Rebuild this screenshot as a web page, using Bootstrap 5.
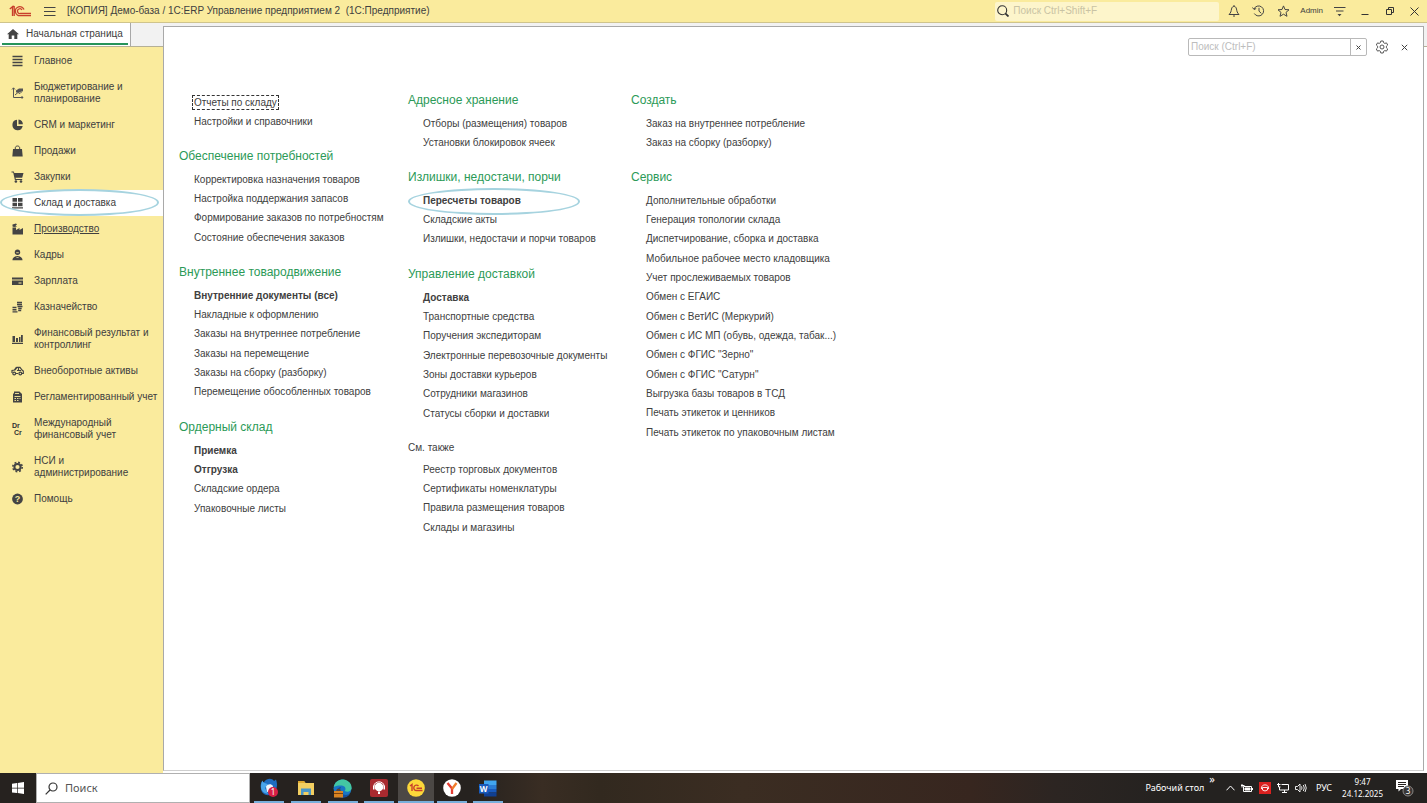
<!DOCTYPE html>
<html lang="ru">
<head>
<meta charset="utf-8">
<meta name="viewport" content="width=device-width, initial-scale=1">
<title>1С:ERP Управление предприятием 2</title>
<link href="https://cdn.jsdelivr.net/npm/bootstrap@5.3.0/dist/css/bootstrap.min.css" rel="stylesheet">
<style>
:root{--yel:#faeb9d;--ink:#404040;--green:#2b9a57}
body{font-family:"Liberation Sans",Arial,sans-serif;font-size:10px;line-height:12px;color:var(--ink);background:#f2f2f2}
a{color:inherit;text-decoration:none}
button{border:0;background:none;padding:0;color:inherit;display:flex;align-items:center;justify-content:center}
svg{display:block;flex:none}
.titlebar{background:var(--yel);height:23px;border-bottom:1px solid #cfc48c;padding-left:9px}
.app-title{margin-left:11px;white-space:pre}
.user-name{font-size:8px}
.gsearch{background:#fdf5cb;width:224px;height:19px;border-radius:2px;margin-right:2px;padding-left:2px}
input{border:0;background:none;outline:0;min-width:0;padding:0}
input::placeholder{color:#bdbdbd;opacity:1}
.gsearch input,.psearch input{font-size:10px}
.gsearch input::placeholder{color:#c9c3a4}
.tool{width:25px;height:22px}
.workspace{background:linear-gradient(#f2f2f2 23px,#b5b096 23px 24px,#fff 24px)}
.side-wrap{width:163px}
.tabs{height:24px;border-bottom:1px solid #b5b096}
.tab-home{width:131px;background:#fff;border-right:1px solid #a8a8a8;padding:0 2px}
.tab-home a{border-bottom:2px solid #26945a;height:22px;padding:2px 0 0 5px;gap:7px}
.side{background:var(--yel);padding-top:1px}
.side a{padding:7px 4px 7px 11px;gap:10px}
.side a.active{background:#fff}
.side a.hovered span{text-decoration:underline}
.ring{position:absolute;pointer-events:none;border:2px solid #a6d3df;border-radius:50%}
.ring-side{inset:-1px 4px 0 0}
.ring-item{left:-15px;top:-3px;width:172px;height:27px}
.panel-box{background:#fff;border:1px solid #a9a9a9;border-bottom-color:#cfcfcf;margin:3px 3px 2px 0}
.panel-tools{padding:11px 11px 0 0}
.psearch{width:179px;height:18px;border:1px solid #b9b9b9;border-radius:2px}
.psearch input{padding-left:2px}
.psearch button{width:16px;border-left:1px solid #b9b9b9}
.sections{padding:37px 15px}
.sec-col{width:223px}
.sec-col:first-child{width:229px}
.sec-col h2{font-size:12px;line-height:15px;color:var(--green);margin:18px 0 6px;font-weight:400}
.sec-col h2:first-child{margin-top:0}
.sec-col h2.plain{font-size:10px;color:var(--ink);margin:17px 0 5px}
.sec-col ul{list-style:none;margin:0;padding-left:15px}
.sec-col li{line-height:19px;white-space:nowrap}
.sec-col li:nth-child(3n){padding-bottom:1px}
.sec-col a.focused{outline:1px dashed #333;outline-offset:1px}
.taskbar{height:30px;background:linear-gradient(90deg,#26221f 0,#26221f 33%,#392d23 38%,#32291f 42%,#3b2d22 52%,#37261f 68%,#2c2522 74%,#242220 82%);color:#fff;font-family:"Noto Sans","Open Sans",sans-serif;font-size:9px}
.start{width:36px}
.tsearch{width:214px;background:#fff;border:1px solid #b0b0b0;gap:7px;padding-left:8px}
.tsearch input{font-family:"Noto Sans",sans-serif;font-size:11px}
.tsearch input::placeholder{color:#555}
.apps{width:256px}
.app-btn{background:linear-gradient(#78afdb,#78afdb) bottom/30px 2px no-repeat}
.app-btn.on{background-color:#4c4845;background-size:36px 2px}
.tray-icons{gap:6px;margin:0 9px 0 11px}
.more{font-size:11px;margin-left:5px}
.clock{font-size:8px;margin:0 13px 0 10px}
.notes{margin-right:13px}
</style>
</head>
<body class="d-flex flex-column min-vh-100">
<header class="titlebar d-flex align-items-center">
  <svg width="23" height="12" viewBox="0 0 23 12" fill="none" stroke="#c8402c" stroke-width="1.300"><path d="M.8 4 3.500 1.700V11M5.200 1V11M3.500 1.500h1.700M15 4.500A4.500 4.500 0 1 0 11.500 10.600H22M13 5A2.400 2.400 0 1 0 11.500 8.500H22"/></svg>
  <button class="ms-2 ps-1" aria-label="Меню"><svg width="12" height="11" viewBox="0 0 12 11" stroke="#444" stroke-width="1"><path d="M0 1.500H11.500M0 5.500H11.500M0 9.500H11.500"/></svg></button>
  <span class="app-title">[КОПИЯ] Демо-база / 1С:ERP Управление предприятием 2  (1С:Предприятие)</span>
  <label class="gsearch ms-auto d-flex align-items-center gap-1">
    <svg width="12" height="12" viewBox="0 0 12 12" fill="none" stroke="#333" stroke-width="1.100"><circle cx="5.200" cy="5.200" r="4.500"/><path d="m8.300 8.300 3.200 3.200" stroke-width="1.800"/></svg>
    <input class="flex-fill" type="text" placeholder="Поиск Ctrl+Shift+F" aria-label="Поиск">
  </label>
  <button class="tool" aria-label="Уведомления"><svg width="12" height="12" viewBox="0 0 12 12" fill="none" stroke="#444"><path d="M1 9.500h10C9 7.500 9 6.500 8.500 4 8 1.800 7 1.500 6 1.500S4 1.800 3.500 4C3 6.500 3 7.500 1 9.500ZM6 0v1.500M5 11h2"/></svg></button>
  <button class="tool" aria-label="История"><svg width="13" height="12" viewBox="0 0 13 12" fill="none" stroke="#444"><path d="M2 4A5 5 0 1 1 2.300 8.500M.5 2.500 2 4.500 4.200 3.500M7 2.800V6.200L9.300 8.300"/></svg></button>
  <button class="tool" aria-label="Избранное"><svg width="13" height="12" viewBox="0 0 13 12" fill="none" stroke="#444"><path d="m6.500.9 1.500 3.600 4 .3-3 2.600 1 3.900-3.500-2.100L3 11.300l1-3.900-3-2.600 4-.3Z"/></svg></button>
  <a href="#" class="user-name mx-1">Admin</a>
  <button class="tool" aria-label="Настройки"><svg width="12" height="11" viewBox="0 0 12 11" stroke="#444"><path d="M0 1.500h11.500M2 5h7.500"/><path d="M3.500 8h4L5.500 10.300Z" fill="#444" stroke="none"/></svg></button>
  <button class="tool" aria-label="Свернуть"><svg width="8" height="10" viewBox="0 0 8 10" stroke="#333"><path d="M.5 8.500h7"/></svg></button>
  <button class="tool" aria-label="Развернуть"><svg width="8" height="8" viewBox="0 0 8 8" fill="none" stroke="#333"><path d="M.5 2.500h5v5h-5ZM2.500 2.500v-2h5v5h-2"/></svg></button>
  <button class="tool" aria-label="Закрыть"><svg width="9" height="9" viewBox="0 0 9 9" stroke="#333"><path d="m.5.5 8 8m0-8-8 8"/></svg></button>
</header>
<div class="workspace d-flex flex-fill">
  <div class="side-wrap d-flex flex-column flex-shrink-0">
    <div class="tabs d-flex"><div class="tab-home"><a href="#" class="d-flex align-items-center">
      <svg width="12" height="10" viewBox="0 0 12 10" fill="#444"><path d="M6 0 0 5.300h1.700V10h3V6.500h2.600V10h3V5.300H12Z"/></svg>Начальная страница</a></div></div>
    <nav class="side flex-fill d-flex flex-column">
      <a href="#" class="d-flex align-items-center"><svg width="13" height="12" viewBox="0 0 13 12" stroke="#444" stroke-width="1.500"><path d="M1.500 1.500h10M1.500 4.500h10M1.500 7.500h10M1.500 10.500h10"/></svg><span>Главное</span></a>
      <a href="#" class="d-flex align-items-center"><svg width="13" height="12" viewBox="0 0 13 12" fill="none" stroke="#555"><path d="M2.500 1v9.500H12M1 2.500 2.500.8 4 2.500M10.500 9l1.500 1.500-1.500 1.300M4 8l3-2.500 2 1 2-2"/><path d="M5 3.500 8 1.500h4v2.500L8 5.500H5Z" fill="#555" stroke="none"/></svg><span>Бюджетирование и планирование</span></a>
      <a href="#" class="d-flex align-items-center"><svg width="13" height="12" viewBox="0 0 13 12" fill="#444"><path d="M6 .8A5.200 5.200 0 1 0 11.700 7H6Z"/><path d="M7.500.5V5.300h4.400A5 5 0 0 0 7.500.5Z"/></svg><span>CRM и маркетинг</span></a>
      <a href="#" class="d-flex align-items-center"><svg width="13" height="12" viewBox="0 0 13 12" fill="#444"><path d="M2 4h9l.7 7.500H1.300Z"/><path d="M4.300 5.500V2.800C4.300.4 8.700.4 8.700 2.800v2.700" fill="none" stroke="#444"/></svg><span>Продажи</span></a>
      <a href="#" class="d-flex align-items-center"><svg width="13" height="12" viewBox="0 0 13 12" fill="#444"><path d="M.5.500h2.300l.5 1.500h9.200l-1.300 4.800H4.600l.2 1.200h6.400v1H3.900L2.200 1.500H.5Z"/><circle cx="4.900" cy="10.500" r="1.300"/><circle cx="10" cy="10.500" r="1.300"/></svg><span>Закупки</span></a>
      <a href="#" class="active position-relative d-flex align-items-center"><svg width="13" height="12" viewBox="0 0 13 12" fill="#444"><path d="M1.500 1h4.500v3.800H1.500ZM7 1h4.500v3.800H7ZM1.500 5.800h4.500v3.400H1.500ZM7 5.800h4.500v3.400H7ZM1 10.200h11v1.300H1Z"/></svg><span>Склад и доставка</span><i class="ring ring-side"></i></a>
      <a href="#" class="hovered d-flex align-items-center"><svg width="13" height="12" viewBox="0 0 13 12" fill="#444"><path d="M1.500 11.500V4.500H5V7L8.500 5v2L12 5v6.500ZM1.500 1.500 5 .5l1 1-1.500 1L6 3.500l-3 .5-1.500-.5Z"/></svg><span>Производство</span></a>
      <a href="#" class="d-flex align-items-center"><svg width="13" height="12" viewBox="0 0 13 12" fill="#444"><circle cx="6.500" cy="3.300" r="2.700"/><path d="M1.500 11.300c0-3 2-3.300 3.500-4.300h3c1.500 1 3.500 1.300 3.500 4.300Z"/><path d="M5.200 3.700h2.600M5 7.500l1.500 1.500L8 7.500" fill="none" stroke="#faeb9d" stroke-width=".8"/></svg><span>Кадры</span></a>
      <a href="#" class="d-flex align-items-center"><svg width="13" height="12" viewBox="0 0 13 12" fill="#444"><path d="M1 2.500h11v2H1ZM1 5.500h11v4.500H1Z"/><path d="M7.500 8h3" stroke="#faeb9d"/></svg><span>Зарплата</span></a>
      <a href="#" class="d-flex align-items-center"><svg width="13" height="12" viewBox="0 0 13 12" fill="none" stroke="#444" stroke-width="1.400"><path d="M6 1.500h5M6 3.500h5M6.500 5.500h5M1.500 6.500h4M1.500 8.700h4M1.500 10.900h5M7.200 7.500h3.500M7.200 9.500h3"/></svg><span>Казначейство</span></a>
      <a href="#" class="d-flex align-items-center"><svg width="13" height="12" viewBox="0 0 13 12" fill="#444"><path d="M1.500 3H4v6H1.500ZM5 5h2v4H5ZM8 4h1.500v5H8ZM10 2h1.800v7H10ZM1 9.700h11V11H1Z"/></svg><span>Финансовый результат и контроллинг</span></a>
      <a href="#" class="d-flex align-items-center"><svg width="13" height="12" viewBox="0 0 13 12" fill="none" stroke="#444" stroke-width="1.200"><path d="M1 8V5.500L4 5l2-2.700h3L11 5l1.300 1v2.500H11M7 8.500H5M3 5.500 5.500 2M6 5.500h4M7.500 2.500v3"/><circle cx="3.200" cy="8.500" r="1.400"/><circle cx="9.300" cy="8.500" r="1.400"/></svg><span>Внеоборотные активы</span></a>
      <a href="#" class="d-flex align-items-center"><svg width="13" height="12" viewBox="0 0 13 12" fill="#444"><path d="M2 2.500h1V.5h5.500L11 3v8.500H2Z"/><path d="M4 2.500h4M3.500 5.500h6M3.500 7.500h1.500M6 7.500h1.500M8.500 7.500h1M3.500 9.500h1.500M6 9.500h1.500" stroke="#faeb9d" stroke-width=".9"/></svg><span>Регламентированный учет</span></a>
      <a href="#" class="d-flex align-items-center"><svg width="13" height="12" viewBox="0 0 13 12" fill="#333" font-family="Liberation Sans" font-weight="700" font-size="7"><text x="1" y="5">Dr</text><text x="3" y="12">Cr</text></svg><span>Международный финансовый учет</span></a>
      <a href="#" class="d-flex align-items-center"><svg width="13" height="12" viewBox="0 0 13 12" fill="none" stroke="#444"><circle cx="6.500" cy="6" r="3.100" stroke-width="2"/><circle cx="6.500" cy="6" r="4.700" stroke-width="1.600" stroke-dasharray="1.850 1.850"/></svg><span>НСИ и<br>администрирование</span></a>
      <a href="#" class="d-flex align-items-center"><svg width="13" height="12" viewBox="0 0 13 12"><circle cx="6.500" cy="6" r="5.400" fill="#444"/><text x="6.500" y="9.200" text-anchor="middle" font-family="Liberation Sans" font-weight="700" font-size="9" fill="#faeb9d">?</text></svg><span>Помощь</span></a>
    </nav>
  </div>
  <main class="panel-box flex-fill">
    <div class="panel-tools d-flex justify-content-end align-items-center">
      <div class="psearch d-flex"><input class="flex-fill" type="text" placeholder="Поиск (Ctrl+F)" aria-label="Поиск"><button aria-label="Очистить"><svg width="5" height="5" viewBox="0 0 5 5" stroke="#444"><path d="m.5.5 4 4m0-4-4 4"/></svg></button></div>
      <button class="ms-2" aria-label="Настройки"><svg width="14" height="14" viewBox="0 0 14 14" fill="none" stroke="#555"><circle cx="7" cy="7" r="2"/><path stroke-linejoin="round" d="M5.800 1h2.400l.4 1.700 1.200.7 1.700-.5 1.200 2.100L11.400 6.200v1.600l1.300 1.200-1.200 2.100-1.700-.5-1.200.7L8.200 13H5.800l-.4-1.700-1.200-.7-1.700.5L1.300 9l1.300-1.200V6.200L1.300 5l1.200-2.100 1.700.5 1.200-.7Z"/></svg></button>
      <button class="ms-2 ps-1 pe-1" aria-label="Закрыть"><svg width="7" height="7" viewBox="0 0 7 7" stroke="#444"><path d="m.8.8 5.400 5.400m0-5.400L.8 6.200"/></svg></button>
    </div>
    <div class="sections d-flex">
      <div class="sec-col">
        <ul>
          <li><a href="#" class="focused">Отчеты по складу</a></li><li><a href="#">Настройки и справочники</a></li>
        </ul>
        <h2>Обеспечение потребностей</h2>
        <ul>
          <li><a href="#">Корректировка назначения товаров</a></li><li><a href="#">Настройка поддержания запасов</a></li><li><a href="#">Формирование заказов по потребностям</a></li><li><a href="#">Состояние обеспечения заказов</a></li>
        </ul>
        <h2>Внутреннее товародвижение</h2>
        <ul>
          <li><a href="#" class="fw-bold">Внутренние документы (все)</a></li><li><a href="#">Накладные к оформлению</a></li><li><a href="#">Заказы на внутреннее потребление</a></li><li><a href="#">Заказы на перемещение</a></li><li><a href="#">Заказы на сборку (разборку)</a></li><li><a href="#">Перемещение обособленных товаров</a></li>
        </ul>
        <h2>Ордерный склад</h2>
        <ul>
          <li><a href="#" class="fw-bold">Приемка</a></li><li><a href="#" class="fw-bold">Отгрузка</a></li><li><a href="#">Складские ордера</a></li><li><a href="#">Упаковочные листы</a></li>
        </ul>
      </div>
      <div class="sec-col">
        <h2>Адресное хранение</h2>
        <ul>
          <li><a href="#">Отборы (размещения) товаров</a></li><li><a href="#">Установки блокировок ячеек</a></li>
        </ul>
        <h2>Излишки, недостачи, порчи</h2>
        <ul>
          <li class="position-relative"><a href="#" class="fw-bold">Пересчеты товаров</a><i class="ring ring-item"></i></li><li><a href="#">Складские акты</a></li><li><a href="#">Излишки, недостачи и порчи товаров</a></li>
        </ul>
        <h2>Управление доставкой</h2>
        <ul>
          <li><a href="#" class="fw-bold">Доставка</a></li><li><a href="#">Транспортные средства</a></li><li><a href="#">Поручения экспедиторам</a></li><li><a href="#">Электронные перевозочные документы</a></li><li><a href="#">Зоны доставки курьеров</a></li><li><a href="#">Сотрудники магазинов</a></li><li><a href="#">Статусы сборки и доставки</a></li>
        </ul>
        <h2 class="plain">См. также</h2>
        <ul>
          <li><a href="#">Реестр торговых документов</a></li><li><a href="#">Сертификаты номенклатуры</a></li><li><a href="#">Правила размещения товаров</a></li><li><a href="#">Склады и магазины</a></li>
        </ul>
      </div>
      <div class="sec-col">
        <h2>Создать</h2>
        <ul>
          <li><a href="#">Заказ на внутреннее потребление</a></li><li><a href="#">Заказ на сборку (разборку)</a></li>
        </ul>
        <h2>Сервис</h2>
        <ul>
          <li><a href="#">Дополнительные обработки</a></li><li><a href="#">Генерация топологии склада</a></li><li><a href="#">Диспетчирование, сборка и доставка</a></li><li><a href="#">Мобильное рабочее место кладовщика</a></li><li><a href="#">Учет прослеживаемых товаров</a></li><li><a href="#">Обмен с ЕГАИС</a></li><li><a href="#">Обмен с ВетИС (Меркурий)</a></li><li><a href="#">Обмен с ИС МП (обувь, одежда, табак...)</a></li><li><a href="#">Обмен с ФГИС "Зерно"</a></li><li><a href="#">Обмен с ФГИС "Сатурн"</a></li><li><a href="#">Выгрузка базы товаров в ТСД</a></li><li><a href="#">Печать этикеток и ценников</a></li><li><a href="#">Печать этикеток по упаковочным листам</a></li>
        </ul>
      </div>
    </div>
  </main>
</div>
<footer class="taskbar d-flex">
  <button class="start" aria-label="Пуск"><svg width="12" height="12" viewBox="0 0 12 12" fill="#fff"><path d="M0 1.700 5 1v4.700H0ZM5.700.9 12 0v5.700H5.700ZM0 6.400h5v4.700L0 10.400ZM5.700 6.400H12V12l-6.300-.9Z"/></svg></button>
  <label class="tsearch d-flex align-items-center"><svg width="13" height="13" viewBox="0 0 13 13" fill="none" stroke="#333" stroke-width="1.200"><circle cx="8" cy="5" r="4"/><path d="M5 8 .7 12.300"/></svg><input class="flex-fill" type="text" placeholder="Поиск" aria-label="Поиск в Windows"></label>
  <div class="apps d-flex">
    <button class="app-btn flex-fill" aria-label="Thunderbird"><svg width="20" height="20" viewBox="0 0 20 20"><path d="M5 4C8 0 13 0 15 3l2-1.500c2 5 1 11-3 14C9 19 3 17 2 11 1 7 2 5 3.500 2.500c0 1.500.5 2 1.500 1.500Z" fill="#1e6cc0"/><path d="M3.500 2.500C3.500 5 7 5 9 6.500L6 10l3 6C4 15 2 12 2 9c0-3 .5-5 1.500-6.500Z" fill="#4aa5ea"/><path d="M7 8.500C9 6 12 5.500 14 8l-1 5-5 1Z" fill="#f1f5fb"/><circle cx="14" cy="14" r="5" fill="#d81f45"/><text x="14" y="17" text-anchor="middle" font-size="8" fill="#fff">1</text></svg></button>
    <button class="app-btn flex-fill" aria-label="Проводник"><svg width="18" height="18" viewBox="0 0 18 18"><path d="M1 2h6l1.500 2H17v12H1Z" fill="#f3cf61"/><path d="M1 2h6l1.500 2H1Z" fill="#e0a92f"/><path d="M4 9.500h10V16h-2.500v-3h-5v3H4Z" fill="#4a97c9"/></svg></button>
    <button class="app-btn flex-fill" aria-label="Edge"><svg width="19" height="19" viewBox="0 0 19 19"><circle cx="9.500" cy="9.500" r="9" fill="#1976c4"/><path d="M.7 8C2 2 7 0 11 .6c5 .8 8 5 7.600 9-.5 3-4 4-7 2.500 2-2 .5-5.500-3-5.600C5 6.300 2 7 .7 8Z" fill="#43c7a3"/><path d="M8 8c-2 3 0 8 5 8l4-1c-3 4-8 4.500-11 3C2 15 3 8 8 8Z" fill="#164f9c"/><path d="M1 12h9v6.500H1Z" fill="#d88423"/><path d="M1 14.500h9M4 12v-1.300h3V12" stroke="#7d430b" fill="none"/></svg></button>
    <button class="app-btn flex-fill" aria-label="Поддержка"><svg width="18" height="18" viewBox="0 0 18 18"><rect width="18" height="18" rx="2" fill="#a92a2f"/><circle cx="9" cy="8" r="4.300" fill="#fff"/><path d="M3 6.500h1.500v4H3ZM13.500 6.500H15v4h-1.500ZM8 12.500h2V15H8Z" fill="#fff"/><path d="M4 7C4 1.500 14 1.500 14 7" fill="none" stroke="#fff"/></svg></button>
    <button class="app-btn on flex-fill" aria-label="1С"><svg width="18" height="18" viewBox="0 0 18 18"><circle cx="9" cy="9" r="8.800" fill="#fcd83a"/><path d="M3 7 5 5.500v6.500M11.500 7A2.700 2.700 0 1 0 9.500 11.500h6M9.500 9.300h5.500" fill="none" stroke="#c8402c" stroke-width="1.400"/></svg></button>
    <button class="app-btn flex-fill" aria-label="Яндекс Браузер"><svg width="18" height="18" viewBox="0 0 18 18"><circle cx="9" cy="9" r="8.800" fill="#fff"/><path d="M4.500 4 9 9.500V15" fill="none" stroke="#e33e34" stroke-width="2.300"/><path d="m13.500 4-4.500 6" stroke="#f07c2a" stroke-width="2.300"/></svg></button>
    <button class="app-btn flex-fill" aria-label="Word"><svg width="18" height="17" viewBox="0 0 18 17"><path d="M5 .5h12.500V5H5Z" fill="#41a5ee"/><path d="M5 5h12.500v4H5Z" fill="#2b7cd3"/><path d="M5 9h12.500v3.500H5Z" fill="#185abd"/><path d="M5 12.500h12.500v4H5Z" fill="#103f91"/><rect y="4" width="9.500" height="9.500" fill="#185abd"/><text x="4.700" y="11.500" text-anchor="middle" font-size="8" font-weight="700" fill="#fff">W</text></svg></button>
  </div>
  <div class="d-flex align-items-center ms-auto">
    <span>Рабочий стол</span><span class="more align-self-start">»</span>
    <div class="tray-icons d-flex align-items-center">
    <button aria-label="Скрытые значки"><svg width="9" height="6" viewBox="0 0 9 6" fill="none" stroke="#fff"><path d="M.5 5.300 4.500 1l4 4.300"/></svg></button>
    <svg width="12" height="9" viewBox="0 0 12 9" fill="none" stroke="#fff"><path d="M2.500 2.500h8v5h-8ZM11.500 4v2M0 1.500h3.500M1 0v3.500"/><path d="M4 4h5v2H4Z" fill="#fff"/></svg>
    <svg width="12" height="12" viewBox="0 0 12 12"><path d="M0 0h12v12H0Z" fill="#d9211f"/><path d="M2.500 7C1.500 1.500 10.500 1.500 9.500 7M3.500 5.500h5v2.500q-2.500 2-5 0Z" fill="none" stroke="#fff" stroke-width=".9"/></svg>
    <svg width="12" height="11" viewBox="0 0 12 11" fill="none" stroke="#fff"><path d="M4.500 1.500h7v5.500H2.500V4M5 9.500h5M7.500 7v2.500M0 1.500h3.500M1.500 0v4h2"/></svg>
    <svg width="12" height="10" viewBox="0 0 12 10" fill="none" stroke="#fff" stroke-width=".9"><path d="M.5 3.500h2L5 1v8L2.500 6.500h-2ZM6.500 3.300q1 1.700 0 3.400M8.300 2q2 3 0 6M10 1q2.500 4 0 8"/></svg>
    </div>
    <span>РУС</span>
    <span class="clock text-center">9:47<br>24.12.2025</span>
    <button class="notes" aria-label="Уведомления"><svg width="18" height="18" viewBox="0 0 18 18"><path d="M0 1h12v9H5l-2.500 2.500V10H0Z" fill="#fff"/><path d="M2 3.500h8M2 5.500h8M2 7.500h6" stroke="#26221f"/><circle cx="12" cy="12" r="5" fill="#3a3735" stroke="#8a8886"/><text x="12" y="15" text-anchor="middle" font-size="8" fill="#fff">3</text></svg></button>
  </div>
</footer>
<script src="https://cdn.jsdelivr.net/npm/bootstrap@5.3.0/dist/js/bootstrap.bundle.min.js"></script>
</body>
</html>
